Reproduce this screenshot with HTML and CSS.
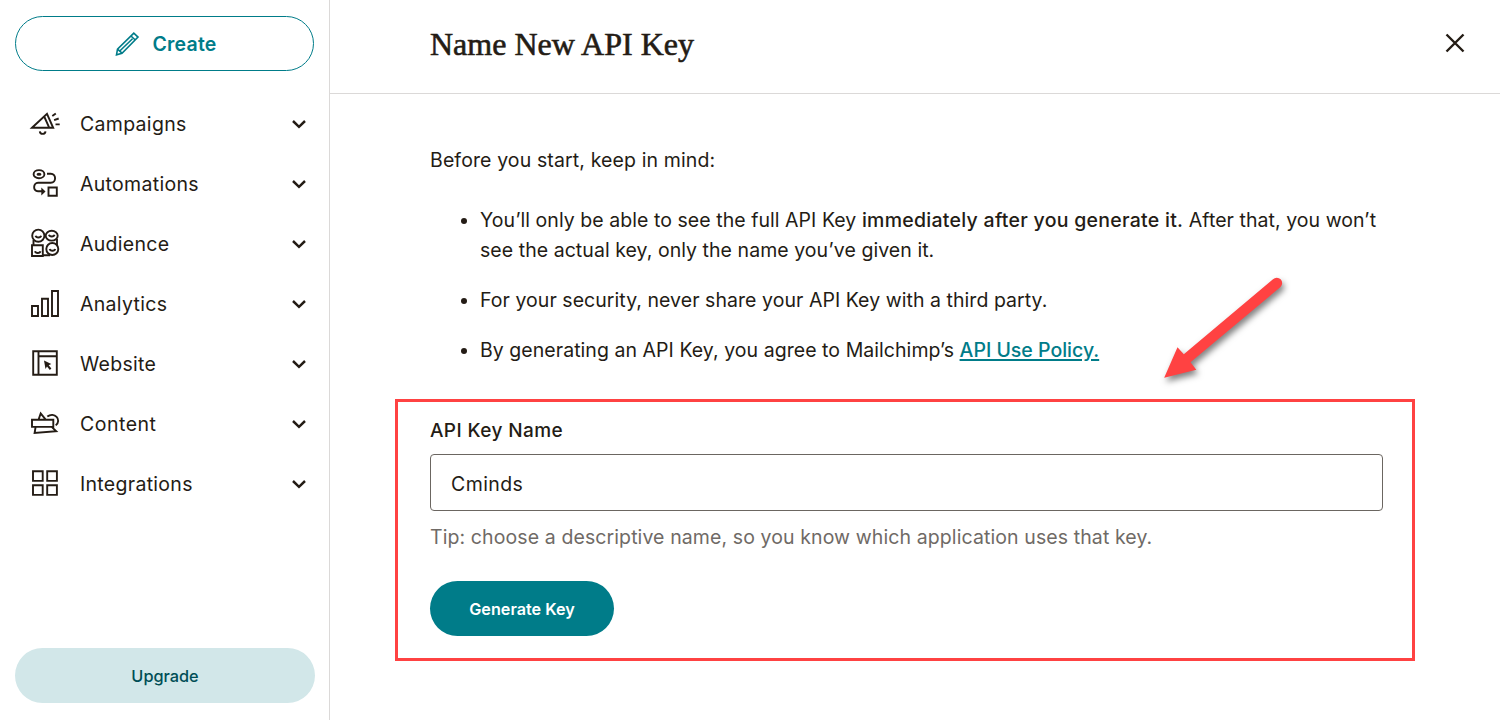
FILE: index.html
```html
<!DOCTYPE html>
<html lang="en">

<head>
    <meta charset="UTF-8">
    <meta name="viewport" content="width=device-width, initial-scale=1.0">
    <title>Name New API Key</title>
    <link rel="stylesheet" href="styles.css">
</head>

<body>
    <aside class="sidebar">
        <button class="create-button">
            <svg class="pencil" viewBox="0 0 26 26">
                <path d="M2.5 23.8 3.5 18.2 19.8 2.2 24 6.1 8 22.2ZM3.5 18.2 8 22.2M17 5l4.3 4M5.5 20.3 18.5 7.7" />
            </svg>
            <span>Create</span>
        </button>

        <nav>
            <a class="nav-item" href="#">
                <svg class="icon" viewBox="10 9 30 30">
                    <path d="M12 27.8 27 13.8 33.2 27.8ZM24.2 16.5 29.3 27.8M19.8 31.3c.3 3.4 5.4 3.4 5.7 0M32.3 16l3.5-2.6M34.1 20.2l4.6-1.7M35.5 24.4h4.2" />
                </svg>
                <span>Campaigns</span>
                <svg class="chevron" viewBox="0 0 16 16"><path d="M2 5l6 5.8L14 5" /></svg>
            </a>
            <a class="nav-item" href="#">
                <svg class="icon" viewBox="10 9 30 30">
                    <ellipse cx="19" cy="14.2" rx="5.4" ry="4.1" />
                    <ellipse cx="19" cy="14.2" rx="1.5" ry=".6" />
                    <path d="M27 13.8h3.8c5.7 0 5.7 8.9 0 8.9H18c-4.8 0-5.5 8.6 0 8.6h4M28.5 27.5h8.3v8.3h-8.3Z" />
                    <path class="solid" d="M21.3 27.5v8l4.2-4Z" />
                </svg>
                <span>Automations</span>
                <svg class="chevron" viewBox="0 0 16 16"><path d="M2 5l6 5.8L14 5" /></svg>
            </a>
            <a class="nav-item" href="#">
                <svg class="icon" viewBox="10 9 30 30">
                    <circle cx="18.3" cy="15.7" r="6.1" />
                    <ellipse cx="31.7" cy="15.7" rx="6" ry="4.9" />
                    <circle cx="32.3" cy="29" r="6" />
                    <path d="M12 25.2h10.8v10.8H12ZM13.5 20v5M37 19v6M23 35.3h7M15.6 15.8c.5 2.3 5 2.3 5.5 0M29 14.8c.5 2.3 5 2.3 5.5 0M15 31.2c.5 2.3 5 2.3 5.5 0M29.7 29c.5 2.3 5 2.3 5.5 0" />
                </svg>
                <span>Audience</span>
                <svg class="chevron" viewBox="0 0 16 16"><path d="M2 5l6 5.8L14 5" /></svg>
            </a>
            <a class="nav-item" href="#">
                <svg class="icon" viewBox="10 9 30 30">
                    <path d="M12 26h6v10h-6ZM22 18.7h6V36h-6ZM32 11h6v25h-6Z" />
                </svg>
                <span>Analytics</span>
                <svg class="chevron" viewBox="0 0 16 16"><path d="M2 5l6 5.8L14 5" /></svg>
            </a>
            <a class="nav-item" href="#">
                <svg class="icon" viewBox="10 9 30 30">
                    <path d="M13.2 11.2h23.6v23.6H13.2ZM18.5 11.2v23.6M18.5 16.2h18.3" />
                    <path class="solid" d="M24 20.5 31.3 24l-2.6 1.2 2.7 3.4-1.6 1.3-2.8-3.4-1.5 2.5Z" />
                </svg>
                <span>Website</span>
                <svg class="chevron" viewBox="0 0 16 16"><path d="M2 5l6 5.8L14 5" /></svg>
            </a>
            <a class="nav-item" href="#">
                <svg class="icon" viewBox="10 9 30 30">
                    <path d="M12 19.7h21.3v7.2H12ZM18.5 19.7l2.2-6.2 5 6.2M15.6 26.9 14.6 33l21.6-1.8-4.5-4.3M27.3 16.6c7-5.2 15 3.2 8.4 8.8" />
                </svg>
                <span class="wide">Content</span>
                <svg class="chevron" viewBox="0 0 16 16"><path d="M2 5l6 5.8L14 5" /></svg>
            </a>
            <a class="nav-item" href="#">
                <svg class="icon" viewBox="10 9 30 30">
                    <path d="M13 11.2h9.7v9.7H13ZM27.2 11.2h9.7v9.7h-9.7ZM13 25.2h9.7v9.7H13ZM27.2 25.2h9.7v9.7h-9.7Z" />
                </svg>
                <span>Integrations</span>
                <svg class="chevron" viewBox="0 0 16 16"><path d="M2 5l6 5.8L14 5" /></svg>
            </a>
        </nav>

        <button class="upgrade-button">Upgrade</button>
    </aside>

    <main>
        <header>
            <h1>Name New API Key</h1>
            <button class="close-button" aria-label="Close">
                <svg viewBox="0 0 20 20"><path d="M1.5 1.5l17 17M18.5 1.5l-17 17" /></svg>
            </button>
        </header>

        <div class="content">
            <p class="intro">Before you start, keep in mind:</p>
            <ul>
                <li>You’ll only be able to see the full API Key <strong>immediately after you generate it.</strong> After that, you won’t<br>see the actual key, only the name you’ve given it.</li>
                <li>For your security, never share your API Key with a third party.</li>
                <li>By generating an API Key, you agree to Mailchimp’s <a href="#">API Use Policy.</a></li>
            </ul>

            <form class="key-form">
                <label for="key-name">API Key Name</label>
                <input type="text" id="key-name" value="Cminds">
                <p class="tip">Tip: choose a descriptive name, so you know which application uses that key.</p>
                <button type="button" class="generate-button">Generate Key</button>
                <svg class="arrow" viewBox="0 0 170 140">
                    <path d="M24.2 117.7 37.5 87.3 43.8 94.3 133 19.2A5.3 5.3 0 0 1 140.5 27L50.5 102.3 56.3 109.8Z" />
                </svg>
            </form>
        </div>
    </main>
</body>

</html>
```
FILE: styles.css
```css
* {
    box-sizing: border-box;
}

body {
    display: flex;
    height: 720px;
    margin: 0;
    overflow: hidden;
    background-color: #fff;
    color: #241c15;
    font-family: Inter, "Liberation Sans", sans-serif;
    font-size: 19.5px;
    line-height: 30px;
}

button {
    font-family: inherit;
    cursor: pointer;
}

svg {
    fill: none;
    stroke: currentColor;
}

.sidebar {
    display: flex;
    flex-direction: column;
    width: 330px;
    padding: 16px 14px 17px 15px;
    border-right: 1px solid #dbd9d8;
}

.create-button {
    display: flex;
    align-items: center;
    justify-content: center;
    gap: 12px;
    width: 299px;
    height: 55px;
    padding: 0 0 0 2px;
    border: 1px solid #007c89;
    border-radius: 28px;
    background: #fff;
    color: #007c89;
    font-size: 19.5px;
    font-weight: 600;
    letter-spacing: 0.2px;
}

.pencil {
    width: 26px;
    height: 26px;
    stroke-width: 1.6;
}

nav {
    margin-top: 23px;
}

.nav-item {
    display: flex;
    align-items: center;
    height: 60px;
    padding: 0 8px 0 15px;
    color: inherit;
    letter-spacing: 0.3px;
    text-decoration: none;
}

.wide {
    letter-spacing: 0.5px;
}

.icon {
    width: 30px;
    height: 30px;
    margin-right: 20px;
    overflow: visible;
    stroke-width: 1.9;
}

.solid {
    fill: currentColor;
    stroke: none;
}

.chevron {
    width: 16px;
    height: 16px;
    margin-left: auto;
    stroke-width: 2.5;
}

.upgrade-button {
    width: 300px;
    height: 55px;
    margin-top: auto;
    border: none;
    border-radius: 28px;
    background-color: #d2e7e9;
    color: #004e56;
    font-size: 16.3px;
    font-weight: 500;
}

main {
    flex: 1;
}

header {
    display: flex;
    align-items: center;
    justify-content: space-between;
    height: 94px;
    padding: 0 35px 7px 100px;
    border-bottom: 1px solid #dbd9d8;
}

h1 {
    margin: 0;
    padding-top: 2px;
    font-family: "Liberation Serif", serif;
    font-size: 32px;
    font-weight: 400;
    -webkit-text-stroke: 0.6px #241c15;
}

.close-button {
    width: 20px;
    height: 20px;
    padding: 0;
    border: none;
    background: none;
    color: #241c15;
}

.close-button svg {
    display: block;
    stroke-width: 2.4;
}

.content {
    padding: 51px 85px 0 65px;
    letter-spacing: 0.05px;
}

p {
    margin: 0;
}

.intro,
ul {
    margin-left: 35px;
}

.intro {
    letter-spacing: 0.12px;
}

ul {
    margin-top: 30px;
    margin-bottom: 34px;
    padding-left: 50px;
    white-space: nowrap;
}

li + li {
    margin-top: 20px;
}

strong {
    font-weight: 550;
    letter-spacing: 0.27px;
}

li a {
    color: #007c89;
    font-weight: 550;
    letter-spacing: 0;
    text-decoration-thickness: 2px;
    text-underline-offset: 2px;
}

.key-form {
    position: relative;
    height: 262px;
    padding: 14px 29px 0 32px;
    border: 3px solid #ff4242;
}

label {
    display: block;
    font-size: 19px;
    font-weight: 500;
    letter-spacing: 0.4px;
}

input {
    display: block;
    width: 100%;
    height: 57px;
    margin-top: 8px;
    padding: 3px 20px 0;
    border: 1px solid #6b6661;
    border-radius: 4px;
    color: #241c15;
    font: inherit;
    letter-spacing: 0.4px;
}

.tip {
    margin-top: 11px;
    color: #6f6a66;
    letter-spacing: 0.1px;
    white-space: nowrap;
}

.generate-button {
    width: 184px;
    height: 55px;
    margin-top: 29px;
    padding: 0;
    border: none;
    border-radius: 28px;
    background-color: #007c89;
    color: #fff;
    font-size: 16.2px;
    font-weight: 600;
}

/* callout arrow above the form */
.arrow {
    position: absolute;
    top: -142px;
    left: 742px;
    width: 170px;
    height: 140px;
    fill: #ff4242;
    stroke: none;
    filter: drop-shadow(2px 4px 3px rgba(0, 0, 0, 0.5));
}
```
